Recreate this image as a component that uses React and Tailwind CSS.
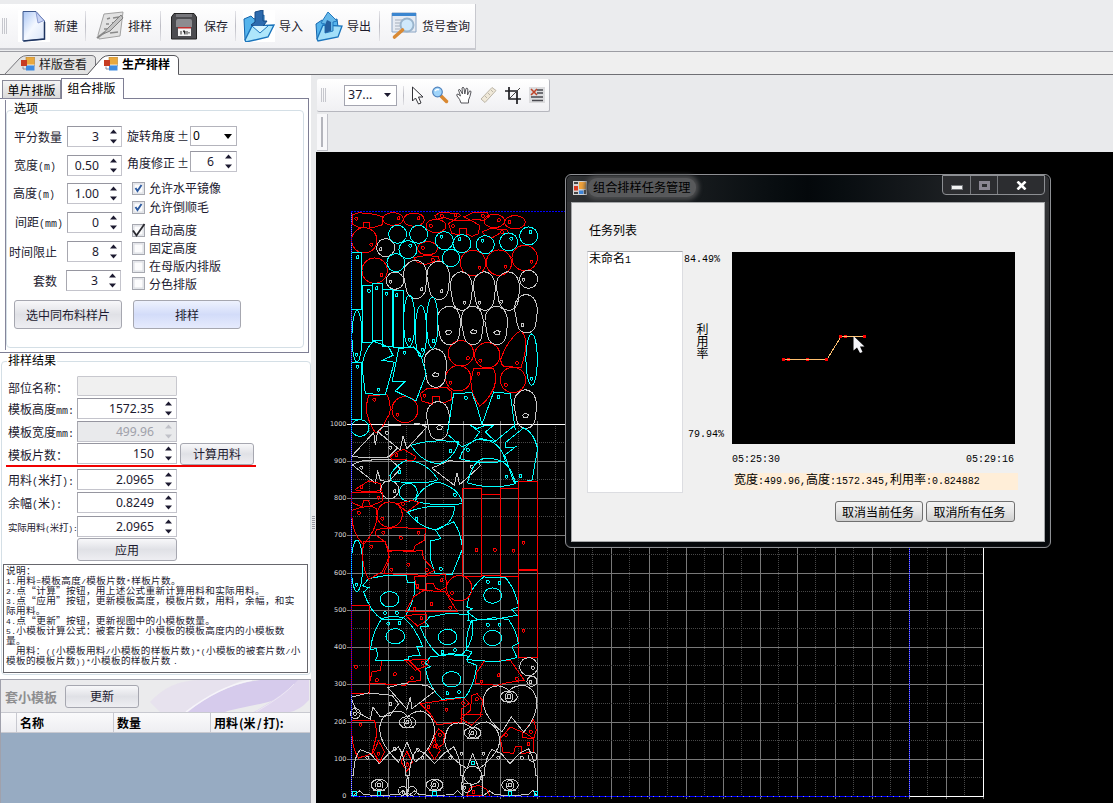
import React from "react";

const CJK = "font-['Noto_Sans_CJK_SC','Noto_Sans',sans-serif]";

/* Mixed text: half-width characters are set in a monospaced face. */
function Mx({ t }) {
  return t.split(/([\x21-\x7e]+)/).map((s, i) =>
    i % 2 ? (
      <span key={i} className="font-['Liberation_Mono',monospace] text-[0.8333em]">{s}</span>
    ) : (
      s
    )
  );
}

const Sep = ({ c }) => <div className={"w-px bg-gradient-to-b from-[#e4e4e8] via-[#bcbcc4] to-[#e4e4e8] shrink-0 " + c} />;

const Grip = ({ c }) => (
  <div className={"flex gap-[1px] shrink-0 " + c}>
    <div className="w-px bg-[#c6c7cd]" />
    <div className="w-px bg-[#c6c7cd]" />
    <div className="w-px bg-[#c6c7cd]" />
  </div>
);

const NewIcon = () => (
  <svg width="32" height="32" viewBox="0 0 32 32" className="bg-white">
    <defs>
      <linearGradient id="np" x1="0" y1="0" x2="1" y2="1"><stop offset="0" stopColor="#aac6f4" /><stop offset=".5" stopColor="#f4f8ff" /><stop offset="1" stopColor="#d8e4f8" /></linearGradient>
    </defs>
    <path d="M5 1.500H18L26.500 11V29L5 31Z" fill="url(#np)" stroke="#3f5a8e" />
    <path d="M5.500 31L26.500 29V12" fill="none" stroke="#1f3560" strokeWidth="1.500" />
    <path d="M18 2L20 13L26 10.500Z" fill="#c8d4f4" stroke="#7a8cc8" strokeWidth=".8" />
  </svg>
);
const NestIcon = () => (
  <svg width="30" height="30" viewBox="0 0 30 30">
    <path d="M8 3L27 1L24 25L3 28L2 24Z" fill="#e2e2e2" stroke="#a2a2a2" />
    <path d="M11 8l3-1M17 7l6-1M10 13l3 0M16 12l6-1M8 18l4 0M14 22l8-1" stroke="#8a8a8a" strokeWidth="1.500" />
    <path d="M25 4L12 17L7 23L14 20L27 7Z" fill="#c4c4c4" stroke="#808080" />
    <path d="M1 27L9 21" stroke="#888" strokeWidth="2" />
  </svg>
);
const SaveIcon = () => (
  <svg width="26" height="27" viewBox="0 0 26 27">
    <path d="M3 .500H23L25.500 4V26H.500V4Z" fill="#4c4c50" stroke="#222" />
    <path d="M5 1h16v3H5z" fill="#77777c" />
    <path d="M5 8Q5 6 7 6H19Q21 6 21 8V14H5Z" fill="#8c8c90" />
    <path d="M7 14H20V23H7Z" fill="#f2f2f2" />
    <path d="M7 14H20V15.500H7Z" fill="#c03030" />
    <path d="M10 18v3.500M12 18h2v3.500M16 18v3.500M18 19v1.500" stroke="#333" />
  </svg>
);
const ImportIcon = () => (
  <svg width="32" height="32" viewBox="0 0 32 32" className="bg-white">
    <path d="M1 9L8 6L11 9L21 5V18L5 31L2 30Z" fill="#55b4ec" stroke="#1565ac" />
    <path d="M2 30L9 16L31 15L25 27L3 32Z" fill="#aee6fb" stroke="#1b74bc" strokeWidth="1.400" />
    <path d="M12 2L20 0V11H24L18 19L8 15L12 12Z" fill="#2d6bae" stroke="#174a84" />
    <path d="M9 16L17 23L25 16" fill="#d6f4ff" stroke="#1b74bc" />
  </svg>
);
const ExportIcon = () => (
  <svg width="28" height="31" viewBox="0 0 28 31">
    <path d="M1 13L7 9L10 11L22 8L23 16L5 29L2 28Z" fill="#55b4ec" stroke="#1565ac" />
    <path d="M2 28L8 14L27 15L23 26L3 30Z" fill="#a2dff9" stroke="#1b74bc" strokeWidth="1.300" />
    <path d="M13 1L22 10L18 11V20L10 22V13L6 12Z" fill="#67b9ea" stroke="#2278bd" />
    <path d="M12 9L16 11V20L10 22V14Z" fill="#245f9f" />
  </svg>
);
const QueryIcon = () => (
  <svg width="27" height="28" viewBox="0 0 27 28">
    <path d="M1 1H25V20H1Z" fill="#e6ebf3" stroke="#8aa4c4" />
    <path d="M1 1H25V4H1Z" fill="#3b86d0" />
    <path d="M4 8H12M4 11H10M4 14H9M4 17H9" stroke="#a5aebb" />
    <circle cx="16" cy="13" r="6.500" fill="#cfe8fb" stroke="#9ab4cc" strokeWidth="2" />
    <path d="M11.500 18L3.500 25" stroke="#d98a35" strokeWidth="3.600" strokeLinecap="round" />
  </svg>
);
const FormIcon = () => (
  <svg width="14" height="14" viewBox="0 0 14 14" className="shrink-0">
    <path d="M5 0H13.500V9H5Z" fill="#e8a83e" stroke="#b78231" strokeWidth=".6" />
    <path d="M5 8H13.500V13.500H5Z" fill="#3f8be0" />
    <path d="M5 8H13.500" stroke="#fff" strokeWidth=".8" />
    <path d="M0 3H6V9H0Z" fill="#c63c22" />
    <path d="M2 9.500V12H5" stroke="#8a8a9a" fill="none" />
  </svg>
);

function TopBar() {
  return (
    <div className="h-[52px] shrink-0 bg-[#ebecee] border-b border-[#9c9da3] pt-[4px]">
      <div className="h-[46px] w-[476px] bg-gradient-to-b from-white to-[#f1f1f4] border-b-2 border-r border-[#c7c8ce] flex items-center text-[12px] leading-none text-[#1d1b2c]">
        <Grip c="ml-[2px] h-[16px]" />
        <div className="ml-[11px]"><NewIcon /></div>
        <span className="ml-[4px] w-[24px]">新建</span>
        <Sep c="h-[30px] ml-[7px]" />
        <div className="ml-[10px]"><NestIcon /></div>
        <span className="ml-[2px] w-[24px]">排样</span>
        <Sep c="h-[30px] ml-[8px]" />
        <div className="ml-[10px]"><SaveIcon /></div>
        <span className="ml-[7px] w-[24px]">保存</span>
        <Sep c="h-[30px] ml-[7px]" />
        <div className="ml-[7px]"><ImportIcon /></div>
        <span className="ml-[4px] w-[24px]">导入</span>
        <div className="ml-[12px]"><ExportIcon /></div>
        <span className="ml-[4px] w-[24px]">导出</span>
        <Sep c="h-[30px] ml-[8px]" />
        <div className="ml-[11px]"><QueryIcon /></div>
        <span className="ml-[4px] w-[48px] whitespace-nowrap">货号查询</span>
      </div>
    </div>
  );
}

function DocTabs() {
  return (
    <div className="h-[23px] shrink-0 bg-[#efefef] border-b border-[#6f6f74] relative flex text-[12px] leading-none">
      <svg width="182" height="24" className="absolute left-0 top-0" fill="none">
        <path d="M4.500 22.500L20 6Q23 3.500 27 3.500H92Q96 4 95.500 8V22.500Z" fill="#e3e3e3" stroke="#77777c" />
        <path d="M87.500 23L102 6Q105 3.500 109 3.500H174Q178.500 4 178.500 8V23V24H87Z" fill="#fff" />
        <path d="M87.500 22.500L102 6Q105 3.500 109 3.500H174Q178.500 4 178.500 8V22.500" stroke="#55555a" />
      </svg>
      <div className="relative flex items-center pt-[2px] pl-[21px] text-[#222]">
        <FormIcon /><span className="ml-[4px] w-[48px]">样版查看</span>
      </div>
      <div className="relative flex items-center pt-[2px] pl-[17px] font-bold text-black">
        <FormIcon /><span className="ml-[4px] w-[48px]">生产排样</span>
      </div>
    </div>
  );
}

const Arrows = ({ c }) => (
  <svg width="7" height="15" viewBox="0 0 7 15" className={"shrink-0 " + (c || "fill-[#1c1a30]")}>
    <path d="M0 4.500L3.500 0.500L7 4.500ZM0 10.500L3.500 14.500L7 10.500Z" />
  </svg>
);

function Spin({ v, w, off }) {
  return (
    <div className={`h-[21px] shrink-0 border border-t-[#9696a0] border-l-[#a8a8b0] border-r-[#c4c4cc] border-b-[#c4c4cc] flex items-center justify-end pr-[4px] gap-[11px] leading-none text-[12.2px] font-['Noto_Sans',sans-serif] ${w} ${off ? "bg-[#e9eaec] text-[#a0a1aa]" : "bg-white text-[#1c1a30]"}`}>
      <span className="pt-px">{v}</span>
      <Arrows c={off ? "fill-[#c0c1c8]" : ""} />
    </div>
  );
}

const Btn = ({ t, c }) => (
  <div className={"rounded-[3px] border border-[#a6a7b0] flex items-center justify-center text-[12px] leading-none text-[#1c1a30] shrink-0 " + c}>{t}</div>
);
const GREY = "bg-gradient-to-b from-[#f8f8fa] via-[#e0e1e6] to-[#eeeef2]";

function Field({ label, lc, v, h }) {
  return (
    <div className={"flex items-start " + h}>
      <div className={"w-[59px] h-[22px] flex items-center whitespace-nowrap shrink-0 " + lc}><span><Mx t={label} /></span></div>
      <Spin v={v} w="w-[55px]" />
    </div>
  );
}

function Check({ t, on, big, c }) {
  return (
    <div className={"flex items-center " + c}>
      <svg width="13" height="13" viewBox="0 0 13 13" className="mr-[4px] shrink-0 overflow-visible">
        <rect x=".5" y=".5" width="12" height="12" fill="#eceef2" stroke="#a6a8b0" />
        <rect x="2" y="2" width="9" height="9" fill="#fcfcfd" stroke="#d4d6dc" strokeWidth=".8" />
        {on && !big && <path d="M3.500 6L5.500 9L9.500 3" fill="none" stroke="#2c5aa0" strokeWidth="1.900" />}
        {big && <path d="M1 6.500L4.500 11.500L12.500 0" fill="none" stroke="#2a2a30" strokeWidth="1.800" />}
      </svg>
      <span>{t}</span>
    </div>
  );
}

function Options() {
  return (
    <div className="pt-[3px] shrink-0">
      <div className="flex items-end text-[12px] leading-none text-black relative z-10 -mb-px h-[21px] pl-[2px]">
        <div className="w-[59px] h-[19px] border border-b-[#85859a] border-[#8a8a98] bg-gradient-to-b from-[#f4f4f4] to-[#dadada] flex items-center justify-center whitespace-nowrap">单片排版</div>
        <div className="w-[63px] h-[21px] border border-b-0 border-[#7e7e94] bg-white flex items-center justify-center pb-[2px] pr-[2px] whitespace-nowrap">组合排版</div>
      </div>
      <div className="w-[309px] h-[255px] border border-l-0 border-[#7e7e94] bg-white flex pl-[5px]">
        <div className="w-px bg-[#85859a] mt-px mb-[2px]" />
        <fieldset className="relative w-[298px] h-[238px] mt-[11px] border border-[#d4dfe6] rounded-[4px] text-[12px] leading-none text-[#1c1a30]">
          <div className="absolute left-[6px] -top-[9px] bg-white px-px text-black">选项</div>
          <div className="flex pt-[15px]">
            <div className="w-[120px] pl-px">
              <Field label="平分数量" lc="pl-[6px]" v="3" h="h-[29px]" />
              <Field label="宽度(m)" lc="pl-[6px]" v="0.50" h="h-[28px]" />
              <Field label="高度(m)" lc="pl-[5px]" v="1.00" h="h-[29px]" />
              <Field label="间距(mm)" lc="pl-[7px]" v="0" h="h-[29px]" />
              <Field label="时间限止" lc="pl-px" v="8" h="h-[29px]" />
              <div className="flex items-start -ml-px">
                <div className="w-[59px] h-[21px] flex items-center pl-[26px] shrink-0">套数</div>
                <Spin v="3" w="w-[55px]" />
              </div>
            </div>
            <div>
              <div className="flex">
                <span className="w-[63px] flex items-center whitespace-nowrap gap-[2px]"><span>旋转角度</span><span>±</span></span>
                <div className="w-[47px] h-[20px] border border-[#b4b4bc] bg-white flex items-center justify-between pl-[2px] pr-[4px] font-['Noto_Sans',sans-serif] text-black">
                  <span>0</span>
                  <svg width="8" height="5"><path d="M0 0H8L4 5Z" /></svg>
                </div>
              </div>
              <div className="flex mt-[5px]">
                <span className="w-[63px] flex items-center whitespace-nowrap gap-[2px] pt-[2px]"><span>角度修正</span><span>±</span></span>
                <Spin v="6" w="w-[47px]" />
              </div>
              <div className="pl-[5px] mt-[7px]">
                <Check t="允许水平镜像" on c="h-[18px]" />
                <Check t="允许倒顺毛" on c="h-[20px]" />
                <Check t="自动高度" on big c="h-[18px] mt-[4px]" />
                <Check t="固定高度" c="h-[18px]" />
                <Check t="在母版内排版" c="h-[18px]" />
                <Check t="分色排版" c="h-[17px]" />
              </div>
            </div>
          </div>
          <div className="flex gap-[11px] pl-[7px] mt-[8px]">
            <Btn t="选中同布料样片" c={"w-[108px] h-[29px] " + GREY} />
            <Btn t="排样" c="w-[108px] h-[29px] bg-gradient-to-b from-[#eef2fe] via-[#d3dcf9] to-[#e6ebfd]" />
          </div>
        </fieldset>
      </div>
    </div>
  );
}

function Result({ label, v, off, h, empty, small, children }) {
  return (
    <div className={"flex items-start pl-[6px] " + h}>
      <div className={"w-[69px] h-[23px] flex items-center whitespace-nowrap shrink-0 " + (small ? "text-[9.5px] tracking-[-0.2px]" : "")}><span><Mx t={label} /></span></div>
      {empty ? <div className="w-[100px] h-[20px] border border-[#c8c8ce] bg-[#f0f0f0] rounded-[1px]" /> : <Spin v={v} off={off} w="w-[100px]" />}
      {children}
    </div>
  );
}

const NOTES = [
  "说明：",
  "1.用料=模板高度/模板片数*样板片数。",
  "2.点“计算”按钮，用上述公式重新计算用料和实际用料。",
  "3.点“应用”按钮，更新模板高度，模板片数，用料，余幅，和实",
  "际用料。",
  "4.点“更新”按钮，更新视图中的小模板数量。",
  "5.小模板计算公式：被套片数：小模板的模板高度内的小模板数",
  "量。",
  "\u3000用料：((小模板用料/小模板的样板片数)*(小模板的被套片数/小",
  "模板的模板片数))*小模板的样板片数 .",
];

function Results() {
  return (
    <fieldset className="relative w-[310px] h-[314px] ml-px mt-[8px] border border-[#d4dfe6] rounded-[4px] text-[12px] leading-none text-[#1c1a30] shrink-0">
      <div className="absolute left-[5px] -top-[8px] bg-white px-px text-black">排样结果</div>
      <div className="pt-[14px]">
        <Result label="部位名称：" empty h="h-[22px]" />
        <Result label="模板高度mm:" v="1572.35" h="h-[23px]" />
        <Result label="模板宽度mm:" v="499.96" off h="h-[22px]" />
        <Result label="模板片数：" v="150" h="h-[22px]">
          <Btn t="计算用料" c={"ml-[3px] w-[74px] h-[22px] " + GREY} />
        </Result>
        <div className="h-[2px] w-[250px] ml-[4px] bg-[#f00000]" />
        <Result label="用料(米打):" v="2.0965" h="mt-[2px] h-[23px]" />
        <Result label="余幅(米):" v="0.8249" h="h-[24px]" />
        <Result label="实际用料(米打):" v="2.0965" small h="h-[22px]" />
        <Btn t="应用" c={"ml-[75px] w-[100px] h-[23px] " + GREY} />
        <div className="mt-[3px] ml-px w-[305px] h-[109px] border border-[#66666c] bg-white pl-[2px] text-[9.6px] tracking-[0.35px] leading-[10px] whitespace-pre">
          {NOTES.map((n, i) => <div key={i} className="h-[10px]"><Mx t={n} /></div>)}
        </div>
      </div>
    </fieldset>
  );
}

function SubTemplates() {
  return (
    <div className="mt-[4px] w-[311px] flex-1 border border-[#a0a1ac] border-b-0 bg-[#97abc2] flex flex-col">
      <div className="h-[32px] relative flex items-center bg-[#ebebed] shrink-0 overflow-hidden">
        <svg className="absolute right-0 top-0" width="160" height="32" viewBox="0 0 160 32">
          <path d="M0 22Q20 0 50 0H92Q60 14 40 32H10Z" fill="#e6e0ee" opacity=".8" />
          <path d="M38 32Q70 5 110 0L150 0Q140 18 110 24Q80 30 75 32Z" fill="#d6cbec" />
          <path d="M36 32Q70 6 102 0" fill="none" stroke="#f6f4fa" strokeWidth="1.500" />
          <path d="M104 32Q135 14 148 0H159V20Q150 30 140 32Z" fill="#dfd5ee" />
          <path d="M106 32Q136 14 144 4" fill="none" stroke="#ece6f4" />
        </svg>
        <span className="ml-[4px] w-[53px] text-[13px] leading-none font-bold text-[#8e8e90] whitespace-nowrap relative">套小模板</span>
        <Btn t="更新" c={"ml-[7px] w-[74px] h-[23px] relative " + GREY} />
      </div>
      <div className="h-[21px] border-y border-[#c8c9d0] bg-gradient-to-b from-[#fafafb] to-[#eeeef2] flex items-stretch text-[12px] leading-none font-bold text-black shrink-0">
        <div className="w-[16px] border-r border-[#c8c9d0]" />
        <div className="w-[97px] border-r border-[#c8c9d0] pl-[3px] flex items-center">名称</div>
        <div className="w-[97px] border-r border-[#c8c9d0] pl-[3px] flex items-center">数量</div>
        <div className="pl-[3px] flex items-center">
          <span>用料</span><span className="pl-px">(</span><span>米</span><span className="px-[1.5px]">/</span><span>打):</span>
        </div>
      </div>
    </div>
  );
}

function ViewBar() {
  return (
    <div className="h-[77px] shrink-0 bg-[#e9eaec] pt-[4px] pl-px">
      <div className="h-[33px] w-[233px] rounded-[2px] bg-gradient-to-b from-white to-[#f0f0f3] border-b border-r border-[#b6b7be] flex items-center">
        <Grip c="ml-[4px] h-[14px]" />
        <div className="ml-[18px] mr-[6px] w-[53px] h-[21px] border border-[#a4a5b0] bg-white flex items-center justify-between pl-[3px] pr-[5px] text-[12.500px] leading-none font-['Noto_Sans',sans-serif] text-[#1c1a30] shrink-0">
          <span>37...</span><svg width="7" height="4"><path d="M0 0H7L3.500 4Z" fill="#1c1a30" /></svg>
        </div>
        <Sep c="h-[19px]" />
        <svg className="ml-[7px]" width="13" height="20" viewBox="0 0 13 20"><path d="M1.500 2V16L4.500 13L7.500 19L10 18L7.500 12H12Z" fill="#fff" stroke="#333338" /></svg>
        <svg className="ml-[7px]" width="18" height="18" viewBox="0 0 18 18"><path d="M9.500 9.500L15.500 15.500" stroke="#d98831" strokeWidth="3.500" strokeLinecap="round" /><circle cx="6.500" cy="6" r="4.800" fill="#9fd4fa" stroke="#5283bd" strokeWidth="1.200" /><path d="M4 5Q6 2.500 8 4" stroke="#fff" strokeWidth="1.500" fill="none" /></svg>
        <svg className="ml-[6px]" width="18" height="18" viewBox="0 0 18 18"><path d="M6 17Q5 13 2 10Q1 8 3 8L5.500 10L3.500 4Q4 2.500 5.200 4L7.500 8L7 2Q8 .5 9 2L9.800 8L11 2.500Q12.200 1.500 12.800 3L12.500 9L14.500 5Q16 4.500 16 6Q15 11 13.500 14V17Z" fill="#fff" stroke="#55555a" /></svg>
        <svg className="ml-[7px]" width="17" height="18" viewBox="0 0 17 18"><path d="M1 13L12 1.500L16 4.500L5 16.500Z" fill="#efe8d8" stroke="#bcb6a8" /><path d="M5 10l2 2M8 7l2 2M11 4l2 2" stroke="#bcb6a8" /></svg>
        <svg className="ml-[8px]" width="16" height="17" viewBox="0 0 16 17"><path d="M4 0V12H16M0 4H12V17" stroke="#1e1e22" strokeWidth="1.700" fill="none" /><path d="M5 11L15 1" stroke="#444" /></svg>
        <svg className="ml-[8px] bg-[#dcdcde]" width="16" height="16" viewBox="0 0 16 16"><path d="M8 3H14M8 6H14M2 10H14M3 13.500H14" stroke="#4a4a50" strokeWidth="1.600" /><path d="M2 2L8 8M8 2L2 8" stroke="#c0452a" strokeWidth="1.600" /></svg>
      </div>
      <div className="mt-[2px] w-[11px] h-[37px] bg-[#f8f8fa] border-b border-r border-[#c0c1c8] flex justify-center pt-[3px]">
        <div className="w-[2px] h-[30px] bg-[#b4b5bc]" />
      </div>
    </div>
  );
}

/* ---- marker layout drawing ---- */
const R = "#ff0000", C = "#00ffff", W = "#c8c8c8";
const circ = (x, y, a, b = a) => `M${x - a} ${y}a${a} ${b} 0 1 0 ${2 * a} 0a${a} ${b} 0 1 0 ${-2 * a} 0Z`;
const rect = (a, b, c, d) => `M${a} ${b}H${c}V${d}H${a}Z`;
const pod = (x, y, w = 68, h = 115) =>
  `M${x + w * 0.15} ${y + 12}Q${x + w * 0.5} ${y - 12} ${x + w * 0.83} ${y + 10}Q${x + w} ${y + 25} ${x + w} ${y + h * 0.45}L${x + w * 0.92} ${y + h * 0.82}Q${x + w * 0.78} ${y + h} ${x + w * 0.55} ${y + h}Q${x + w * 0.2} ${y + h} ${x + w * 0.12} ${y + h * 0.78}L${x} ${y + h * 0.4}Q${x} ${y + 20} ${x + w * 0.15} ${y + 12}Z`;
const dots = (list) => list.map(([x, y]) => circ(x, y, 4, 5)).join("");
const gems = (list) => list.map(([x, y]) => `M${x - 10} ${y}L${x - 2} ${y - 6}L${x + 9} ${y - 2}L${x + 6} ${y + 6}L${x - 5} ${y + 7}Z`).join("");
const core = (x, y) => circ(x, y, 25, 17) + circ(x, y + 1, 11, 14) + `M${x - 18} ${y + 16}H${x + 18}M${x - 6} ${y + 5}h10v-10h-8Z`;

const LAYERS = [
  {
    y: 200,
    shapes: [
      [R, "M97 44L115 37L165 42L187 50V73L165 80L148 83V66H131V83L112 80L95 70ZM343 46L360 36L415 40L420 46L400 60L372 52L350 57ZM430 50L455 38L500 36L507 48L490 62L470 56L450 60ZM385 70L400 60L455 62L478 75L475 100L455 108L440 102V85H418V103L395 100ZM485 95L510 85L560 88L565 100L540 98L515 113L495 105ZM280 172L320 165L355 170L357 180L335 186L315 193L290 185ZM600 391Q614 400 617 430Q614 470 602 502L550 498Q540 490 542 475Q560 420 600 391ZM460 505H520Q530 530 522 560Q505 600 478 617Q450 580 452 540ZM300 580L320 565L380 562L395 575L393 598L375 606L358 605V590H337V612L305 602ZM145 586L200 583Q214 610 208 640L180 690L165 697Q140 660 137 620Z"],
      [R, circ(218, 56, 31, 19) + circ(281, 58, 31, 20) + circ(522, 62, 31, 20) + circ(584, 66, 31, 20) + circ(347, 77, 30, 20) + circ(132, 120, 38) + circ(322, 144, 30, 20) + circ(458, 188, 38) + circ(536, 187, 38) + circ(613, 173, 38) + circ(163, 211, 38) + circ(422, 459, 38) + circ(501, 465, 38) + circ(414, 534, 38) + circ(578, 539, 38) + circ(254, 628, 39)],
      [R, dots([[108, 55], [235, 54], [295, 54], [365, 46], [406, 44], [488, 46], [536, 60], [568, 65], [332, 76], [398, 77], [545, 95], [153, 133], [308, 142], [338, 178], [478, 202], [556, 199], [634, 184], [184, 224], [443, 474], [480, 481], [590, 488], [391, 547], [557, 553], [475, 520], [313, 586], [162, 598], [232, 643]])],
      [W, circ(196, 142, 27) + circ(224, 241, 26) + circ(625, 237, 27) + pod(250, 180, 70) + pod(320, 183) + pod(390, 215, 66) + pod(459, 215, 66) + pod(528, 215, 70) + pod(583, 283) + pod(351, 318, 70) + pod(423, 318, 66) + pod(494, 318) + pod(311, 446) + pod(581, 569) + pod(319, 604)],
      [W, dots([[181, 147], [211, 244], [610, 238], [304, 267], [364, 273], [433, 307], [478, 307], [543, 304], [607, 374]]) + gems([[385, 395], [460, 394], [531, 396], [346, 523], [616, 645], [358, 681]])],
      [C, circ(232, 102, 27) + circ(295, 102, 27) + circ(263, 148, 27) + circ(227, 187, 27) + circ(372, 121, 27) + circ(425, 130, 27) + circ(495, 133, 27) + circ(565, 125, 27) + circ(625, 107, 27) + circ(392, 173, 26) + circ(267, 362, 17, 77) + circ(302, 393, 17, 77) + circ(336, 367, 17, 77) + circ(110, 408, 15, 77) + circ(634, 478, 17, 77) + circ(119, 683, 27, 25)],
      [C, rect(95, 157, 124, 328) + rect(127, 256, 158, 427) + rect(158, 250, 187, 421) + rect(188, 268, 218, 438) + rect(219, 271, 250, 442) + rect(95, 487, 124, 658)],
      [C, "M160 423L205 440L218 465L187 480L222 486L195 583L135 580L125 500Q130 450 160 423ZM235 445L280 440L300 460L318 520L287 602L225 572L253 545H215ZM382 695L400 580L455 577Q472 620 485 672L520 575L570 580L585 690"],
      [C, dots([[112, 171], [146, 271], [169, 264], [199, 280], [229, 285], [112, 499], [268, 418], [307, 448], [340, 422], [109, 463], [634, 535], [175, 568], [253, 457], [437, 592], [535, 590], [270, 136], [364, 109], [418, 117], [487, 121], [573, 115], [631, 95]])],
    ],
  },
  {
    y: 415,
    shapes: [
      [W, "M95 122L160 52L165 88L172 50L232 98L205 125L130 128ZM172 48L190 33L295 25L320 35L260 100L248 62L240 105ZM95 148L130 135L210 132L240 160L205 200L180 195L172 165L165 203ZM335 158L385 137L475 138L480 152L440 188L418 208L410 172L402 210Z" + circ(208, 223, 27) + dots([[210, 97], [200, 52], [123, 157], [455, 154], [223, 228]])],
      [C, "M273 90Q330 70 415 80Q405 125 360 145Q310 145 275 95ZM418 130Q430 85 480 70Q540 75 555 137Q490 150 418 130ZM209 180Q230 145 260 135Q320 140 353 193Q310 210 213 197ZM442 203Q460 120 510 130Q570 130 585 205Q520 225 442 203ZM285 258Q300 215 350 200Q415 215 427 265Q350 275 285 258ZM262 290Q330 265 403 275Q400 325 350 343Q300 340 262 290ZM585 95L555 97V82L610 38Q640 50 652 100L635 196L580 200L553 120ZM450 30L470 40L490 32L520 30L495 50L525 78L470 72L425 95L385 60M450 30L478 50L462 72M583 30L525 78M345 343L362 370L330 377V430L345 475L395 478L427 400Q420 345 400 320ZM145 490L200 480L258 482L262 503L282 500V535Q270 590 245 612L185 612Q150 590 130 530L145 517L127 512ZM490 485L555 487Q585 520 595 575L575 582L590 600L520 613L470 612L440 590L455 580L440 575Q445 520 490 485Z"],
      [C, circ(264, 231, 27) + circ(110, 451, 17, 77) + circ(208, 552, 28, 23) + circ(517, 541, 27, 23) + dots([[391, 107], [443, 103], [237, 170], [559, 184], [404, 238], [289, 311], [600, 182], [362, 460], [109, 508], [194, 593], [230, 592], [503, 499], [538, 503]])],
      [R, rect(427, 220, 484, 485) + rect(485, 238, 540, 482) + rect(541, 220, 595, 485) + rect(595, 198, 651, 462) + rect(595, 465, 651, 727)],
      [R, "M105 222L145 197L180 205L183 225L150 230L110 226ZM95 232H187L185 258L150 272L145 255H130L125 275L95 262ZM95 285Q150 265 168 280Q180 330 130 388Q90 350 95 285ZM210 125L225 112L250 102L288 125L280 135L215 132ZM230 265L275 255L297 262L260 290ZM168 342L230 337L315 340L313 375L285 390L280 405L205 405L195 380L165 358ZM130 380H195L207 425L185 470L145 492Q120 450 130 380ZM205 408L240 405L260 410L305 405L310 430L342 465L315 480L190 475L205 440ZM282 485L375 478L380 515L360 525L345 518L340 505H320V525L290 520ZM310 525L375 530L412 590H255L280 545Z"],
      [R, circ(208, 298, 38) + circ(417, 519, 38) + dots([[469, 404], [524, 403], [580, 406], [610, 382], [610, 646], [124, 215], [175, 247], [186, 310], [116, 292], [229, 120], [248, 265], [189, 352], [295, 352], [242, 367], [153, 394], [264, 448], [213, 463], [320, 463], [292, 512], [364, 495], [395, 533], [334, 566], [283, 580], [390, 577]])],
    ],
  },
  {
    y: 600,
    shapes: [
      [R, rect(95, 15, 148, 280) + "M185 182L265 180L300 215L302 240L265 245L255 255L148 248L155 215L180 210ZM255 180L325 177L322 195L285 210ZM255 45L320 42L318 62L292 77ZM490 185L570 180L612 240L560 247L530 255L465 250L470 215ZM300 310L430 292L447 310L425 325V365L350 373L330 340ZM455 285L470 280L487 300L480 350L455 375L422 355L450 330ZM422 343H487M95 360H163L170 400L155 460L115 473Q90 440 95 360ZM175 422L193 455L177 488L160 455ZM260 453L276 485L260 513L242 485ZM342 418L360 450L343 478L325 450ZM355 385L372 400L370 430L350 445L343 405ZM540 415L570 380L605 395L608 412L640 415V455L605 460L603 440H585L580 460L548 455ZM610 395L640 358L648 390L640 415ZM440 585L450 562L475 555L500 568L510 588Z"],
      [R, dots([[107, 199], [224, 222], [170, 240], [275, 233], [308, 187], [303, 54], [535, 225], [484, 244], [590, 235], [379, 328], [325, 320], [428, 308], [470, 297], [121, 373], [175, 460], [262, 493], [343, 438], [359, 403], [557, 403], [625, 431], [632, 394], [460, 575]])],
      [C, "M185 55L215 47L250 52Q285 80 308 140L290 140L300 165L265 168V178L220 182L165 180L172 165L168 145L150 148Q158 90 185 55ZM328 50L380 40L445 42L443 60L458 65V95Q450 140 425 163L390 160L355 165Q320 135 300 80L325 78L315 65ZM455 60L490 58L520 52L565 58Q590 95 594 130L575 138L590 172L530 185L440 178L455 155L440 150Q435 100 455 60ZM330 170L385 163L440 167L443 185L470 195Q460 260 435 290L365 297Q325 260 315 205L330 200L315 188Z" + circ(225, 108, 28, 23) + circ(382, 110, 28, 23) + circ(517, 113, 27, 23) + circ(394, 237, 28, 23) + dots([[204, 70], [238, 68], [367, 155], [404, 149], [503, 73], [538, 73], [381, 279], [416, 275]])],
      [W, "M95 290L145 278L215 285L235 310L210 345L180 350L158 320L150 357L110 335L95 300ZM203 262L245 250L320 255L345 272L275 325L270 290L260 327ZM262 350Q245 325 215 335Q180 345 178 385Q180 435 235 485L260 425L285 485Q340 440 343 390Q340 340 300 332Q275 335 262 350ZM457 385Q430 362 400 370Q375 380 373 425Q380 470 440 505L457 460L477 505Q535 460 538 425Q538 380 500 365Q470 365 457 385ZM566 272Q545 250 515 260Q490 270 488 305Q492 350 545 395L573 350L610 395Q645 360 650 310Q648 265 610 255Q580 255 566 272ZM95 588V525L101 525Q98 475 120 448L150 460L177 490L205 460L235 440Q256 475 256 525L262 528L258 545L262 588L248 570L235 582L177 587L130 582L118 572ZM262 588L266 545L262 525H268Q268 475 290 448L315 460L343 490L370 460L400 440Q422 475 422 525H427L424 560L428 588L412 570L400 582L343 587L296 582L282 572ZM487 588V525L493 525Q492 475 515 448L543 460L569 490L597 460L625 445Q645 480 646 525L651 528V588L638 570L625 582L569 587L522 582L508 572Z"],
      [W, core(262, 366) + core(457, 398) + core(566, 289) + core(177, 554) + core(343, 554) + core(569, 554) + circ(457, 525, 27) + circ(625, 199, 27) + circ(635, 243, 15) + circ(637, 470, 13) + circ(105, 340, 15) + circ(440, 562, 14) + circ(275, 572, 13) + circ(247, 572, 13) + dots([[211, 311], [104, 340], [224, 445], [293, 448], [638, 202], [631, 245], [141, 472], [307, 472], [390, 472], [534, 472], [605, 472], [424, 460], [490, 460], [250, 577], [433, 562], [483, 533]])],
    ],
    chips: [[103, 580], [176, 580], [343, 580], [569, 580], [647, 580], [458, 488]],
  },
];

function Drawing() {
  const xs = Array.from({ length: 17 }, (_, i) => Math.round(351 + i * 37.2) + 0.5);
  const ys = Array.from({ length: 10 }, (_, i) => Math.round(796 - i * 37.25) + 0.5);
  return (
    <svg width="797" height="651" viewBox="316 152 797 651" className="block" shapeRendering="crispEdges" fill="none">
      <rect x="316" y="152" width="797" height="651" fill="#000" />
      {xs.map((x, i) => (
        <g key={i}>
          {i > 0 && <path d={`M${x} 421V799`} stroke="#787878" />}
          <path d={`M${x + 18} 424V796`} stroke="#484848" strokeDasharray="1 1" />
        </g>
      ))}
      {ys.map((y, i) => (
        <g key={i}>
          {i > 0 && <path d={`M347 ${y}H983`} stroke="#787878" />}
          <path d={`M351 ${y - 19}H983`} stroke="#484848" strokeDasharray="1 1" />
        </g>
      ))}
      <path d="M347 424.500H983.500V796.500H909" stroke="#fff" />
      <path d="M983.500 797V799" stroke="#787878" />
      <path d="M351.500 796.500H909.500M351.500 211V796M909.500 424V796" stroke="#99c" />
      {LAYERS.map((l) => (
        <g key={l.y} transform={`translate(320.300 ${l.y + 0.3}) scale(.33333)`}>
          {l.shapes.map(([c, d], i) => <path key={i} d={d} stroke={c} vectorEffect="non-scaling-stroke" />)}
          {(l.chips || []).map(([x, y], i) => (
            <path key={i} d={rect(x - 5, y - 5, x + 5, y + 5)} stroke={C} vectorEffect="non-scaling-stroke" />
          ))}
        </g>
      ))}
      <path d="M351.500 796.500H909.500M351.500 211.500V796M909.500 211.500V796" stroke="#0000ff" strokeDasharray="1 1" />
      <path d="M351 211.500H909" stroke="#0000ff" strokeDasharray="2 1" />
      <path d="M351 796.500H909" stroke="#0000ff" strokeDasharray="2 1" />
      <g fill="#d8d8d8" fontSize="6.500" textAnchor="end" className="font-['DejaVu_Sans',sans-serif]" shapeRendering="auto">
        {Array.from({ length: 11 }, (_, i) => (
          <text key={i} x="346.500" y={798 - i * 37.25}>{i * 100}</text>
        ))}
      </g>
    </svg>
  );
}

function Dialog() {
  return (
    <div className="absolute left-[249px] top-[99px] w-[486px] h-[374px] rounded-[6px] border border-[#8e9094] bg-[#101114] p-px text-black">
      <div className="h-full rounded-[5px] bg-gradient-to-b from-[#3a3b3d] via-[#17181b] to-[#05080b] flex flex-col px-[4px] pb-[4px]">
        <div className="h-[26px] -mx-[4px] px-[4px] rounded-t-[5px] shrink-0 flex items-start bg-gradient-to-r from-[#303234] via-[#04080b] to-[#303134]">
          <svg width="14" height="14" viewBox="0 0 14 14" className="mt-[5px] ml-[2px]">
            <path d="M0 0H14V14H0Z" fill="#d4d4d4" /><path d="M1 1H5V3H1ZM1 11H5V13H1ZM11 9H13V13H11Z" fill="#444" />
            <path d="M6 1H13V8H6Z" fill="#f0a23a" /><path d="M1 5H5V9.500H1Z" fill="#d83a22" /><path d="M6 9.500H10.500V13H6Z" fill="#3f87dc" />
          </svg>
          <div className="mt-[2px] ml-[1px] h-[19px] w-[108px] pl-[5px] flex items-center text-[12.200px] leading-none whitespace-nowrap rounded-[9px] bg-[#58595b] shadow-[0_0_4px_3px_#4a4b4d]">组合排样任务管理</div>
          <div className="ml-auto -mt-px flex h-[20px] border border-[#8c8e92] rounded-b-[4px] bg-[#2c2d30]">
            <div className="w-[28px] border-r border-[#77797d] flex items-center justify-center"><div className="w-[12px] h-[5px] mt-[4px] bg-[#f4f4f4] border border-[#77797d]" /></div>
            <div className="w-[27px] border-r border-[#77797d] flex items-center justify-center"><div className="w-[11px] h-[9px] border-[3px] border-[#8a8692]" /></div>
            <div className="w-[46px] flex items-center justify-center">
              <svg width="11" height="9" viewBox="0 0 11 9"><path d="M1.500 .500L9.500 8.500M9.500 .500L1.500 8.500" stroke="#fff" strokeWidth="2.600" /></svg>
            </div>
          </div>
        </div>
        <div className="flex-1 border border-[#a4a6a8] bg-[#f0f0f0] pt-[20px] pl-[15px] flex flex-col text-[12px] leading-none">
          <div className="h-[14px] pl-[2px] flex items-center">任务列表</div>
          <div className="flex mt-[14px]">
            <div className="w-[96px] h-[242px] bg-white border border-[#dcdde1] border-t-[#a6a8ac] pl-[1px] leading-[12px] shrink-0">未命名<Mx t="1" /></div>
            <div className="w-[49px] flex flex-col pl-[1px] shrink-0">
              <span className="h-[18px] flex items-center"><Mx t="84.49%" /></span>
              <span className="mt-[54px] ml-[12px] w-[13px] text-center leading-[12px]">利用率</span>
              <span className="mt-[65px] pl-[4px] h-[22px] flex items-center"><Mx t="79.94%" /></span>
            </div>
            <div className="w-[286px] pt-px shrink-0">
              <svg width="283" height="192" viewBox="732 252 283 192" className="block bg-black" shapeRendering="crispEdges">
                <path d="M783 359.500H827L841 336.500H865" stroke="#ffc070" fill="none" />
                <path d="M782 358h3v3h-3zM787 358h3v3h-3zM806 358h3v3h-3zM825 358h3v3h-3zM839 335h3v3h-3zM844 335h3v3h-3zM863 335h3v3h-3z" fill="#ff0000" />
                <path d="M785 359.500H825M842 336.500H863" stroke="#ffc070" />
                <path d="M853.500 336V350.500L857 347.500L860 353L862.500 352L860 346.500H864.500Z" fill="#f4f4f8" shapeRendering="auto" />
              </svg>
              <div className="mt-[6px] h-[15px] w-[282px] flex items-center justify-between"><span><Mx t="05:25:30" /></span><span><Mx t="05:29:16" /></span></div>
              <div className="mt-[8px] ml-px h-[17px] w-[285px] bg-[#ffeed8] pl-[1px] pb-[4px] flex items-center whitespace-nowrap"><span><Mx t="宽度:499.96,高度:1572.345,利用率:0.824882" /></span></div>
            </div>
          </div>
          <div className="mt-[8px] pl-[248px] flex gap-[3px]">
            <div className="w-[88px] h-[21px] rounded-[3px] border border-[#707070] bg-gradient-to-b from-[#f4f4f4] via-[#e6e6e6] to-[#cfcfcf] flex items-center justify-center pr-[2px] whitespace-nowrap">取消当前任务</div>
            <div className="w-[89px] h-[21px] rounded-[3px] border border-[#707070] bg-gradient-to-b from-[#f4f4f4] via-[#e6e6e6] to-[#cfcfcf] flex items-center justify-center pr-[2px] whitespace-nowrap">取消所有任务</div>
          </div>
        </div>
      </div>
    </div>
  );
}

export default function App() {
  return (
    <div lang="zh-CN" className={"w-[1113px] h-[803px] overflow-hidden flex flex-col bg-[#e9eaec] " + CJK}>
      <TopBar />
      <DocTabs />
      <div className="flex flex-1 min-h-0">
        <div className="w-[311px] bg-white flex flex-col shrink-0">
          <Options />
          <Results />
          <SubTemplates />
        </div>
        <div className="w-[5px] shrink-0 bg-[#e9eaec] flex justify-center pt-[441px]">
          <svg width="3" height="14"><path d="M1.500 0V14" stroke="#9a9ba4" strokeWidth="3" strokeDasharray="1 1" /></svg>
        </div>
        <div className="flex-1 relative flex flex-col min-w-0">
          <ViewBar />
          <Drawing />
          <Dialog />
        </div>
      </div>
    </div>
  );
}
